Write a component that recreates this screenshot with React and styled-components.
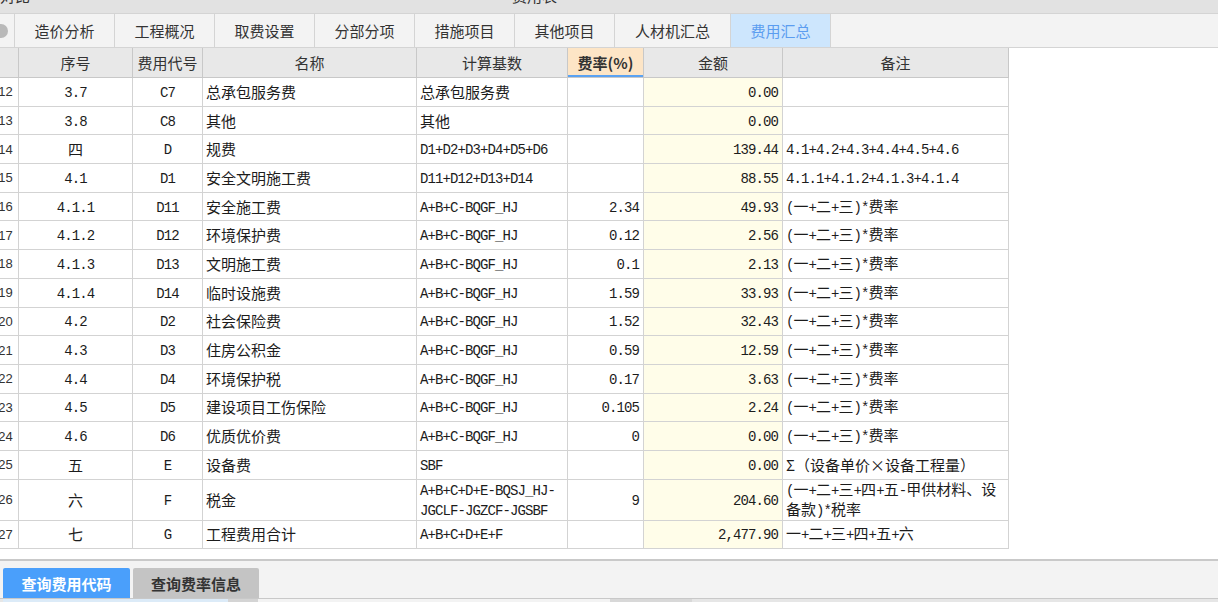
import styled, { createGlobalStyle } from "styled-components";

const GlobalStyle = createGlobalStyle`
  html, body {
    margin: 0;
    padding: 0;
    background: #ffffff;
    font-family: "Noto Sans CJK SC", "Noto Sans", sans-serif;
    color: #222;
  }
`;

const COLS = "26px 114px 70px 214px 151px 76px 139px 226px";

const Page = styled.div`
  width: 100vw;
  height: 100vh;
  display: flex;
  flex-direction: column;
  overflow: hidden;
`;

const TitleBar = styled.div`
  height: 13px;
  flex: none;
  background: #e2e2e2;
  display: flex;
  overflow: hidden;
  font-size: 15px;
  line-height: 15px;
  color: #333;
`;

const TitleText = styled.span`
  margin-top: -12px;
  margin-left: ${(p) => p.$left}px;
  white-space: nowrap;
`;

const TabBar = styled.div`
  height: 35px;
  flex: none;
  box-sizing: border-box;
  border-top: 1px solid #d4d4d4;
  border-bottom: 1px solid #d4d4d4;
  background: #f3f3f3;
  display: flex;
`;

const TabLead = styled.div`
  width: 15px;
  box-sizing: border-box;
  border-right: 1px solid #d4d4d4;
  display: flex;
  align-items: center;
  overflow: hidden;
`;

const LeadDot = styled.span`
  width: 14px;
  height: 14px;
  border-radius: 50%;
  background: #b9b9b9;
  margin-left: -6px;
  flex: none;
`;

const Tab = styled.div`
  width: ${(p) => p.$w || 100}px;
  box-sizing: border-box;
  border-right: 1px solid #d4d4d4;
  display: flex;
  align-items: center;
  justify-content: center;
  font-size: 15px;
  color: ${(p) => (p.$active ? "#5b9df0" : "#333")};
  background: ${(p) => (p.$active ? "#cde6fd" : "transparent")};
`;

const Main = styled.div`
  flex: 1;
  overflow: hidden;
  background: #fff;
`;

const Table = styled.div`
  margin-left: -7px;
  width: max-content;
`;

const HeadRow = styled.div`
  display: grid;
  grid-template-columns: ${COLS};
  height: 30px;
  box-sizing: border-box;
  border-bottom: 1px solid #c8c8c8;
  background: #e8e8e8;
`;

const HeadCell = styled.div`
  box-sizing: border-box;
  border-right: 1px solid #c8c8c8;
  display: flex;
  align-items: center;
  justify-content: center;
  font-size: 15px;
  color: #333;
  background: ${(p) => (p.$rate ? "#fde5c6" : "transparent")};
  font-weight: ${(p) => (p.$rate ? 700 : 400)};
  box-shadow: ${(p) => (p.$rate ? "inset 0 -2px 0 #5aa2f2" : "none")};
`;

const Row = styled.div`
  display: grid;
  grid-template-columns: ${COLS};
  height: ${(p) => p.$h}px;
  box-sizing: border-box;
  border-bottom: 1px solid #d3d3d3;
`;

const Cell = styled.div`
  box-sizing: border-box;
  border-right: 1px solid #d3d3d3;
  display: flex;
  align-items: center;
  justify-content: ${(p) =>
    p.$align === "right" ? "flex-end" : p.$align === "center" ? "center" : "flex-start"};
  padding: ${(p) => (p.$align === "right" ? "0 4px 0 3px" : "0 3px")};
  background: ${(p) => (p.$money ? "#fffde9" : "transparent")};
  font-size: 15px;
  color: #1c1c1c;
  overflow: hidden;
`;

const RowNum = styled(Cell)`
  font-family: "Liberation Sans", Arial, sans-serif;
  font-size: 13px;
  color: #333;
`;

const Lines = styled.div`
  display: flex;
  flex-direction: column;
`;

const Line = styled.div`
  white-space: nowrap;
  line-height: 18px;
`;

const Ascii = styled.span`
  font-family: "Liberation Mono", monospace;
  font-size: 14px;
  letter-spacing: -0.9px;
`;

const Bottom = styled.div`
  height: 43px;
  flex: none;
  box-sizing: border-box;
  border-top: 2px solid #c9c9c9;
  background: #f3f3f3;
  display: flex;
  flex-direction: column;
`;

const BottomTabs = styled.div`
  display: flex;
  gap: 3px;
  padding: 7px 0 0 3px;
`;

const BottomTab = styled.div`
  width: ${(p) => p.$w}px;
  height: 30px;
  border-radius: 2px 2px 0 0;
  display: flex;
  align-items: center;
  justify-content: center;
  font-size: 15px;
  font-weight: 700;
  color: ${(p) => (p.$active ? "#ffffff" : "#333")};
  background: ${(p) => (p.$active ? "#4a9ffb" : "#c4c4c4")};
`;

const BottomStrip = styled.div`
  flex: 1;
  border-top: 1px solid #c8c8c8;
  background: #e6e6e6;
  display: flex;
`;

const StripPart = styled.div`
  width: ${(p) => p.$w}px;
  background: ${(p) => p.$bg};
`;

const tabs = [
  { label: "造价分析" },
  { label: "工程概况" },
  { label: "取费设置" },
  { label: "分部分项" },
  { label: "措施项目" },
  { label: "其他项目" },
  { label: "人材机汇总", w: 116 },
  { label: "费用汇总", active: true },
];

const R = "A+B+C-BQGF_HJ";
const N = "(一+二+三)*费率";

const rows = [
  [12, "3.7", "C7", "总承包服务费", "总承包服务费", "", "0.00", ""],
  [13, "3.8", "C8", "其他", "其他", "", "0.00", ""],
  [14, "四", "D", "规费", "D1+D2+D3+D4+D5+D6", "", "139.44", "4.1+4.2+4.3+4.4+4.5+4.6"],
  [15, "4.1", "D1", "安全文明施工费", "D11+D12+D13+D14", "", "88.55", "4.1.1+4.1.2+4.1.3+4.1.4"],
  [16, "4.1.1", "D11", "安全施工费", R, "2.34", "49.93", N],
  [17, "4.1.2", "D12", "环境保护费", R, "0.12", "2.56", N],
  [18, "4.1.3", "D13", "文明施工费", R, "0.1", "2.13", N],
  [19, "4.1.4", "D14", "临时设施费", R, "1.59", "33.93", N],
  [20, "4.2", "D2", "社会保险费", R, "1.52", "32.43", N],
  [21, "4.3", "D3", "住房公积金", R, "0.59", "12.59", N],
  [22, "4.4", "D4", "环境保护税", R, "0.17", "3.63", N],
  [23, "4.5", "D5", "建设项目工伤保险", R, "0.105", "2.24", N],
  [24, "4.6", "D6", "优质优价费", R, "0", "0.00", N],
  [25, "五", "E", "设备费", "SBF", "", "0.00", "Σ（设备单价×设备工程量）"],
  [26, "六", "F", "税金", "A+B+C+D+E-BQSJ_HJ-\nJGCLF-JGZCF-JGSBF", "9", "204.60", "(一+二+三+四+五-甲供材料、设\n备款)*税率", 41],
  [27, "七", "G", "工程费用合计", "A+B+C+D+E+F", "", "2,477.90", "一+二+三+四+五+六"],
];

// split a string into runs so ascii gets the half-width mono face
function mixed(str) {
  return str.split(/([\x20-\x7e]+)/).map((part, i) =>
    /^[\x20-\x7e]+$/.test(part) ? <Ascii key={i}>{part}</Ascii> : part
  );
}

function Text({ value }) {
  return (
    <Lines>
      {value.split("\n").map((l, i) => (
        <Line key={i}>{mixed(l)}</Line>
      ))}
    </Lines>
  );
}

export default function App() {
  return (
    <>
      <GlobalStyle />
      <Page>
        <TitleBar>
          <TitleText $left={0}>对比</TitleText>
          <TitleText $left={482}>费用表</TitleText>
        </TitleBar>
        <TabBar>
          <TabLead>
            <LeadDot />
          </TabLead>
          {tabs.map((t) => (
            <Tab key={t.label} $w={t.w} $active={t.active}>
              {t.label}
            </Tab>
          ))}
        </TabBar>
        <Main>
          <Table>
            <HeadRow>
              <HeadCell />
              <HeadCell>序号</HeadCell>
              <HeadCell>费用代号</HeadCell>
              <HeadCell>名称</HeadCell>
              <HeadCell>计算基数</HeadCell>
              <HeadCell $rate>费率(%)</HeadCell>
              <HeadCell>金额</HeadCell>
              <HeadCell>备注</HeadCell>
            </HeadRow>
            {rows.map(([n, seq, code, name, base, rate, amt, note, h]) => (
              <Row key={n} $h={h || 28.7}>
                <RowNum $align="center">{n}</RowNum>
                <Cell $align="center"><Text value={seq} /></Cell>
                <Cell $align="center"><Text value={code} /></Cell>
                <Cell><Text value={name} /></Cell>
                <Cell><Text value={base} /></Cell>
                <Cell $align="right"><Text value={rate} /></Cell>
                <Cell $align="right" $money><Text value={amt} /></Cell>
                <Cell><Text value={note} /></Cell>
              </Row>
            ))}
          </Table>
        </Main>
        <Bottom>
          <BottomTabs>
            <BottomTab $active $w={127}>查询费用代码</BottomTab>
            <BottomTab $w={126}>查询费率信息</BottomTab>
          </BottomTabs>
          <BottomStrip>
            <StripPart $w={3} $bg="#e6e6e6" />
            <StripPart $w={225} $bg="#dcebf8" />
            <StripPart $w={30} $bg="#d4d4d4" />
            <StripPart $w={352} $bg="#f3f3f3" />
            <StripPart $w={82} $bg="#d8d8d8" />
          </BottomStrip>
        </Bottom>
      </Page>
    </>
  );
}
